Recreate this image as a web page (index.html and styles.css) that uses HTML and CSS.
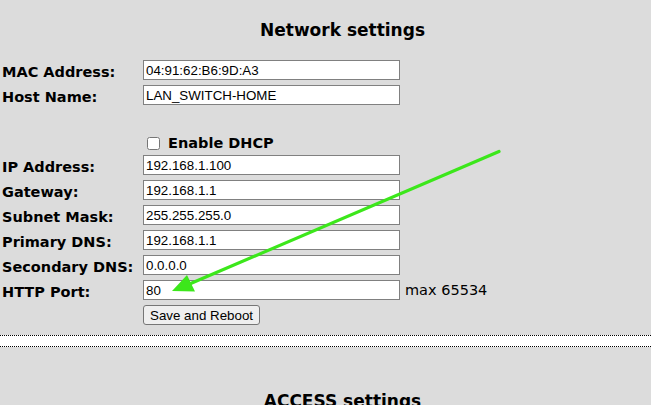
FILE: index.html
```html
<!DOCTYPE html>
<html>
<head>
<meta charset="utf-8">
<link rel="stylesheet" href="styles.css">
</head>
<body>
<div class="page">
  <h2 class="title">Network settings</h2>
  <form class="grid">
    <label class="lbl">MAC Address:</label>
    <input class="field" type="text" value="04:91:62:B6:9D:A3">
    <span></span>

    <label class="lbl">Host Name:</label>
    <input class="field" type="text" value="LAN_SWITCH-HOME">
    <span></span>

    <div class="spacer"></div>

    <span></span>
    <label class="dhcp"><input class="chk" type="checkbox"> Enable DHCP</label>
    <span></span>

    <label class="lbl">IP Address:</label>
    <input class="field" type="text" value="192.168.1.100">
    <span></span>

    <label class="lbl">Gateway:</label>
    <input class="field" type="text" value="192.168.1.1">
    <span></span>

    <label class="lbl">Subnet Mask:</label>
    <input class="field" type="text" value="255.255.255.0">
    <span></span>

    <label class="lbl">Primary DNS:</label>
    <input class="field" type="text" value="192.168.1.1">
    <span></span>

    <label class="lbl">Secondary DNS:</label>
    <input class="field" type="text" value="0.0.0.0">
    <span></span>

    <label class="lbl">HTTP Port:</label>
    <input class="field" type="text" value="80">
    <span class="hint">max 65534</span>

    <span></span>
    <div class="btnrow"><button class="btn" type="button">Save and Reboot</button></div>
    <span></span>
  </form>
  <div class="band"></div>
  <h2 class="title title2">ACCESS settings</h2>

  <svg class="arrow" width="651" height="405" viewBox="0 0 651 405">
    <line x1="499" y1="151.5" x2="186" y2="285.5" stroke="#3ce71b" stroke-width="3.2" stroke-linecap="round"/>
    <polygon points="172,291 187,275 195,291.5" fill="#3ce71b"/>
  </svg>
</div>
</body>
</html>
```

FILE: styles.css
```css
html, body {
  margin: 0;
  padding: 0;
  background: #dcdcdc;
}
body {
  font-family: "DejaVu Sans", Verdana, sans-serif;
  color: #000;
  width: 651px;
  height: 405px;
  overflow: hidden;
}
.page {
  position: relative;
  width: 651px;
  height: 405px;
}
.title {
  margin: 0 0 0 34px;
  padding-top: 20px;
  font-size: 17px;
  line-height: 20px;
  font-weight: bold;
  text-align: center;
  white-space: nowrap;
}
.title2 {
  padding-top: 44px;
}
.grid {
  margin: 20px 0 0 0;
  padding-left: 2px;
  display: grid;
  grid-template-columns: 141px 257px auto;
  grid-template-rows: 20px 20px 20px 15px 20px 20px 20px 20px 20px 20px 20px;
  row-gap: 5px;
  align-items: center;
}
.lbl {
  font-size: 14.5px;
  font-weight: bold;
  line-height: 16px;
  align-self: end;
  white-space: nowrap;
}
.spacer {
  grid-column: 1 / 4;
}
.dhcp {
  font-size: 14.5px;
  font-weight: bold;
  line-height: 15px;
  display: flex;
  align-items: center;
  white-space: pre;
  height: 15px;
  margin-top: 2px;
}
.chk {
  width: 13px;
  height: 13px;
  margin: 0 3px 0 4px;
}
.field {
  box-sizing: border-box;
  width: 257px;
  height: 20px;
  margin: 0;
  padding: 0 2px;
  border: 1px solid #808080;
  background: #fff;
  font-family: "Liberation Sans", Arial, sans-serif;
  font-size: 13.333px;
  color: #000;
}
.hint {
  font-size: 14.5px;
  padding-left: 5px;
  white-space: nowrap;
}
.btnrow {
  display: flex;
  align-items: flex-start;
  height: 20px;
}
.btn {
  box-sizing: border-box;
  height: 20px;
  margin: 0;
  padding: 0 6px;
  border: 1px solid #767676;
  border-radius: 3px;
  background: #efefef;
  font-family: "Liberation Sans", Arial, sans-serif;
  font-size: 13.333px;
  color: #000;
}
.band {
  margin-top: 10px;
  height: 10px;
  background: #fff;
  border-top: 1px dotted #000;
  border-bottom: 1px dotted #000;
}
.arrow {
  position: absolute;
  left: 0;
  top: 0;
  pointer-events: none;
}
```
